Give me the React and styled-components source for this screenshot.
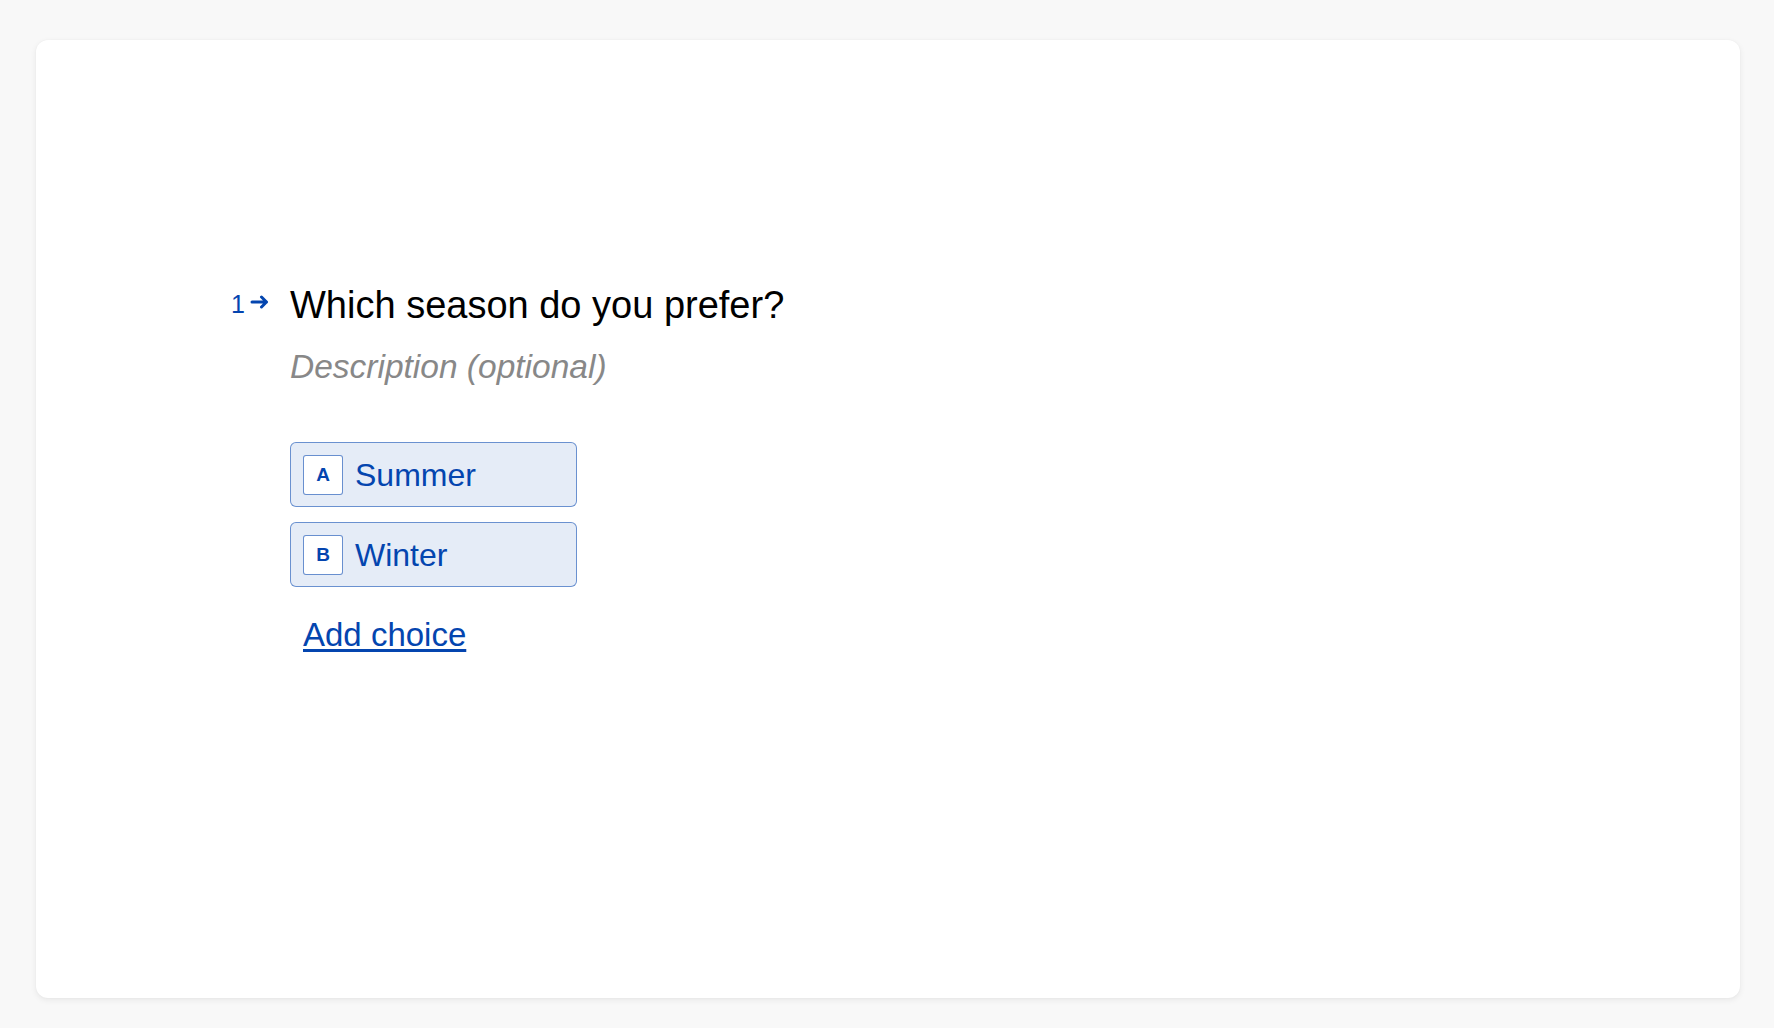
import React from "react";
import styled, { createGlobalStyle } from "styled-components";

const GlobalStyle = createGlobalStyle`
  html, body {
    margin: 0;
    padding: 0;
    background: #f8f8f8;
    font-family: "Liberation Sans", Helvetica, Arial, sans-serif;
  }
  * { box-sizing: border-box; }
`;

const BLUE = "#0445af";

const Page = styled.div`
  height: 100vh;
  padding: 40px 34px 30px 36px;
  display: flex;
  flex-direction: column;
`;

const Card = styled.main`
  flex: 1;
  background: #ffffff;
  border-radius: 12px;
  box-shadow: 0 2px 6px rgba(0, 0, 0, 0.07), 0 0 2px rgba(0, 0, 0, 0.04);
  padding: 241px 0 0 195px;
`;

const Question = styled.section`
  display: grid;
  grid-template-columns: 59px auto;
  justify-content: start;
  align-items: start;
`;

const Counter = styled.div`
  grid-column: 1;
  grid-row: 1;
  margin-top: 11px;
  display: flex;
  align-items: center;
  gap: 5px;
  color: ${BLUE};
  font-size: 25px;
  line-height: 24px;
`;

const ArrowIcon = styled.svg`
  width: 19px;
  height: 14px;
  margin-bottom: 4px;
`;

const Title = styled.h1`
  grid-column: 2;
  grid-row: 1;
  margin: 0;
  font-size: 38px;
  line-height: 48px;
  font-weight: 400;
  color: #000;
`;

const Description = styled.p`
  grid-column: 2;
  margin: 16px 0 0;
  font-size: 33.5px;
  line-height: 44px;
  font-style: italic;
  color: #888888;
`;

const Choices = styled.div`
  grid-column: 2;
  margin-top: 53px;
  display: flex;
  flex-direction: column;
  align-items: flex-start;
  gap: 15px;
`;

const Choice = styled.div`
  width: 287px;
  height: 65px;
  display: flex;
  align-items: center;
  padding: 0 12px;
  border: 1px solid rgba(4, 69, 175, 0.55);
  border-radius: 6px;
  background: rgba(4, 69, 175, 0.1);
  color: ${BLUE};
`;

const Key = styled.span`
  width: 40px;
  height: 40px;
  flex: none;
  display: flex;
  align-items: center;
  justify-content: center;
  border: 1px solid rgba(4, 69, 175, 0.6);
  border-radius: 3px;
  background: #fff;
  font-size: 19px;
  font-weight: 700;
  color: ${BLUE};
`;

const Label = styled.span`
  margin-left: 12px;
  font-size: 32px;
  line-height: 32px;
`;

const AddChoice = styled.a`
  grid-column: 2;
  justify-self: start;
  margin: 28px 0 0 13px;
  font-size: 33px;
  line-height: 40px;
  color: ${BLUE};
  text-decoration: underline;
  text-decoration-thickness: 3px;
  text-underline-offset: 3px;
  cursor: pointer;
`;

const choices = [
  { key: "A", label: "Summer" },
  { key: "B", label: "Winter" },
];

export default function App() {
  return (
    <>
      <GlobalStyle />
      <Page>
        <Card>
          <Question>
            <Counter>
              <span>1</span>
              <ArrowIcon viewBox="0 0 19 14" fill="none">
                <path
                  d="M2 7H16.5M11.5 2L16.5 7L11.5 12"
                  stroke={BLUE}
                  strokeWidth="3"
                  strokeLinecap="round"
                  strokeLinejoin="round"
                />
              </ArrowIcon>
            </Counter>
            <Title>Which season do you prefer?</Title>
            <Description>Description (optional)</Description>
            <Choices>
              {choices.map((c) => (
                <Choice key={c.key}>
                  <Key>{c.key}</Key>
                  <Label>{c.label}</Label>
                </Choice>
              ))}
            </Choices>
            <AddChoice>Add choice</AddChoice>
          </Question>
        </Card>
      </Page>
    </>
  );
}
